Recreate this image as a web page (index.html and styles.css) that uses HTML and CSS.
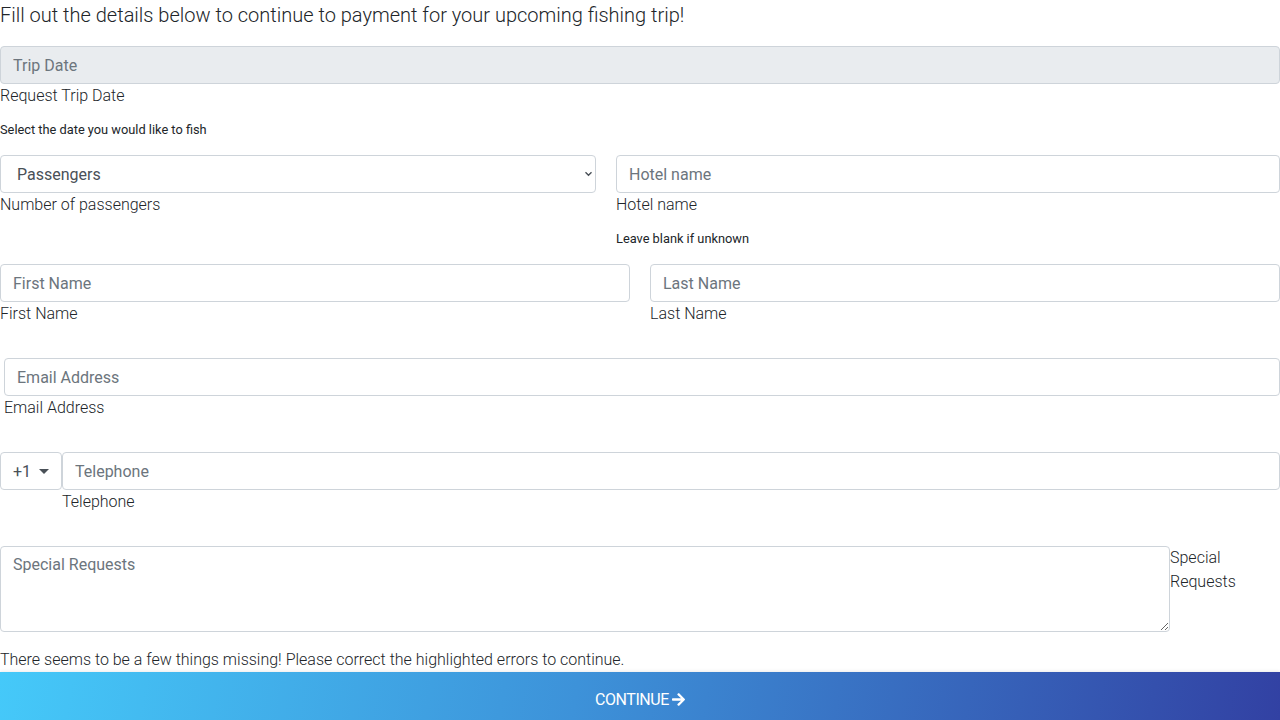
FILE: index.html
```html
<!DOCTYPE html>
<html lang="en">
<head>
<meta charset="utf-8">
<title>Trip details</title>
<link rel="stylesheet" href="styles.css">
</head>
<body>
<form class="trip-form">
  <p class="intro">Fill out the details below to continue to payment for your upcoming fishing trip!</p>

  <div class="group">
    <input class="field field-disabled" type="text" placeholder="Trip Date" readonly>
    <label class="label">Request Trip Date</label>
    <small class="hint">Select the date you would like to fish</small>
  </div>

  <div class="row row-a">
    <div class="col col-pass">
      <select class="field select">
        <option>Passengers</option>
      </select>
      <label class="label">Number of passengers</label>
    </div>
    <div class="col col-hotel">
      <input class="field" type="text" placeholder="Hotel name">
      <label class="label">Hotel name</label>
      <small class="hint">Leave blank if unknown</small>
    </div>
  </div>

  <div class="row row-b">
    <div class="col col-half">
      <input class="field" type="text" placeholder="First Name">
      <label class="label">First Name</label>
    </div>
    <div class="col col-half">
      <input class="field" type="text" placeholder="Last Name">
      <label class="label">Last Name</label>
    </div>
  </div>

  <div class="group group-wide email">
    <input class="field" type="email" placeholder="Email Address">
    <label class="label">Email Address</label>
  </div>

  <div class="group group-wide phone">
    <button type="button" class="code">+1 <span class="caret"></span></button>
    <div class="phone-main">
      <input class="field" type="tel" placeholder="Telephone">
      <label class="label">Telephone</label>
    </div>
  </div>

  <div class="group requests">
    <textarea class="field area" placeholder="Special Requests"></textarea>
    <label class="label side">Special Requests</label>
  </div>

  <p class="error">There seems to be a few things missing! Please correct the highlighted errors to continue.</p>

  <button type="submit" class="continue"><span class="continue-text">CONTINUE</span><svg class="arrow" viewBox="0 0 448 512" aria-hidden="true"><path fill="currentColor" d="M190.5 66.9l22.2-22.2c9.4-9.4 24.6-9.4 33.9 0L441 239c9.4 9.4 9.4 24.6 0 33.9L246.6 467.3c-9.4 9.4-24.6 9.4-33.9 0l-22.2-22.2c-9.5-9.5-9.3-25 .4-34.3L311.4 296H24c-13.3 0-24-10.7-24-24v-32c0-13.3 10.7-24 24-24h287.4L190.9 101.2c-9.8-9.3-10-24.8-.4-34.3z"/></svg></button>
</form>
</body>
</html>
```

FILE: styles.css
```css
* { box-sizing: border-box; }

html, body {
  margin: 0;
  padding: 0;
  background: #fff;
}

body {
  font-family: Roboto, "Liberation Sans", sans-serif;
  font-weight: 300;
  font-size: 16px;
  line-height: 24px;
  color: #212529;
}

.trip-form {
  display: flex;
  flex-direction: column;
  width: 1280px;
}

.intro {
  margin: 0 0 16px;
  font-size: 20px;
  line-height: 30px;
  font-weight: 300;
}

.field {
  display: block;
  width: 100%;
  height: 38px;
  padding: 6px 12px;
  font-family: Roboto, "Liberation Sans", sans-serif;
  font-size: 16px;
  font-weight: 400;
  line-height: 24px;
  color: #495057;
  background: #fff;
  border: 1px solid #ced4da;
  border-radius: 4px;
  outline: none;
}

.field::placeholder {
  color: #6c757d;
  opacity: 1;
}

.field-disabled {
  background: #e9ecef;
}

.label {
  display: block;
  font-weight: 300;
  line-height: 24px;
}

.hint {
  display: block;
  margin-top: 12px;
  font-size: 12.8px;
  line-height: 19px;
  font-weight: 400;
  color: #212529;
}

.group {
  margin-bottom: 16px;
}

.group-wide {
  margin-bottom: 32px;
}

.row {
  display: flex;
  justify-content: space-between;
  margin-bottom: 16px;
}

.row-b {
  margin-bottom: 32px;
}

.col-pass { width: 596px; }
.col-hotel { width: 664px; }
.col-half { width: 630px; }

.select {
  appearance: none;
  -webkit-appearance: none;
  padding: 7px 12px 5px 16px;
  background: #fff url("data:image/svg+xml,%3Csvg xmlns='http://www.w3.org/2000/svg' width='10' height='7' viewBox='0 0 10 7'%3E%3Cpath d='M1.5 1.5l3.5 3.5 3.5-3.5' fill='none' stroke='%23495057' stroke-width='1.6'/%3E%3C/svg%3E") no-repeat;
  background-size: 9px 6px;
  background-position: 583px center;
  color: #495057;
}

.email {
  margin-left: 4px;
}

.phone {
  display: flex;
  align-items: flex-start;
}

.code {
  flex: none;
  width: 62px;
  height: 38px;
  display: flex;
  align-items: center;
  gap: 9px;
  padding: 0 0 0 12px;
  font-family: Roboto, "Liberation Sans", sans-serif;
  font-size: 16px;
  font-weight: 400;
  color: #495057;
  background: #fff;
  border: 1px solid #ced4da;
  border-radius: 4px;
}

.caret {
  width: 0;
  height: 0;
  margin-left: -1px;
  border-left: 5px solid transparent;
  border-right: 5px solid transparent;
  border-top: 5px solid #495057;
}

.phone-main {
  flex: 1;
}

.requests {
  display: flex;
  align-items: flex-start;
}

.area {
  width: 1170px;
  flex: none;
  height: 86px;
  resize: vertical;
}

.side {
  width: 110px;
}

.error {
  margin: 0;
  line-height: 24px;
}

.continue {
  display: flex;
  align-items: center;
  justify-content: center;
  gap: 3px;
  width: 100%;
  height: 48px;
  padding: 6px 0 0 0;
  border: 0;
  border-radius: 0;
  font-family: Roboto, "Liberation Sans", sans-serif;
  font-size: 16px;
  font-weight: 400;
  color: #fff;
  background: linear-gradient(100deg, #45c9f9 0%, #3d92d9 45%, #3241a3 100%);
  box-shadow: 0 -1px 3px rgba(0, 0, 0, 0.08);
}

.continue-text {
  letter-spacing: -0.45px;
}

.arrow {
  width: 13px;
  height: 15px;
}
```
